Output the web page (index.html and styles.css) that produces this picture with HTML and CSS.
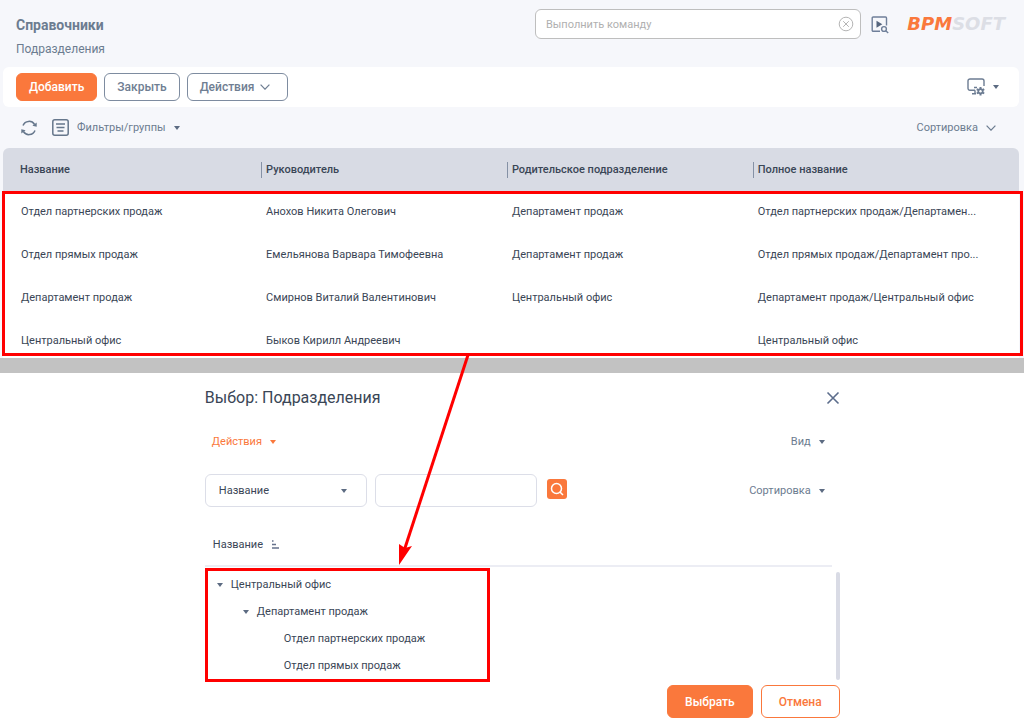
FILE: index.html
```
<!DOCTYPE html>
<html lang="ru">
<head>
  <meta charset="UTF-8">
  <meta name="viewport" content="width=device-width, initial-scale=1.0">
  <title>Справочники - Подразделения</title>
  <link rel="stylesheet" href="styles.css">
</head>
<body>
  <section class="section-page">
    <header class="header">
      <div class="titles">
        <h1>Справочники</h1>
        <p class="subtitle">Подразделения</p>
      </div>
      <div class="command">
        <input type="text" placeholder="Выполнить команду" aria-label="Выполнить команду">
        <button class="icon-btn" aria-label="Очистить">
          <svg width="16" height="16" viewBox="0 0 16 16" fill="none" stroke="#b5b5b5"><circle cx="8" cy="8" r="6.8"/><path d="M5.2 5.2l5.6 5.6M10.8 5.2l-5.6 5.6"/></svg>
        </button>
      </div>
      <button class="icon-btn" aria-label="Выполнить">
        <svg width="18" height="18" viewBox="0 0 18 18" fill="none" stroke="#6f7f99" stroke-width="1.4"><path d="M9 15.3H2.2a1 1 0 0 1-1-1V2a1 1 0 0 1 1-1h12.3a1 1 0 0 1 1 1v7.5"/><path d="M5.5 4.8v7l5.8-3.5z" fill="#55657d" stroke="none"/><circle cx="13" cy="13" r="2.4"/><path d="M14.8 14.8l2.4 2.3"/></svg>
      </button>
      <a href="#" class="logo"><span>BPM</span>SOFT</a>
    </header>

    <div class="toolbar">
      <button class="btn primary">Добавить</button>
      <button class="btn">Закрыть</button>
      <button class="btn menu">Действия
        <svg width="10" height="6" viewBox="0 0 10 6" fill="none" stroke="currentColor" stroke-width="1.2"><path d="M.6.6L5 5.2 9.4.6"/></svg>
      </button>
      <button class="icon-btn view" aria-label="Вид">
        <svg width="18" height="18" viewBox="0 0 18 18" fill="none" stroke="#6c7c92" stroke-width="1.4"><path d="M8 12.3H3A2 2 0 0 1 1 10.3V3a2 2 0 0 1 2-2h12a2 2 0 0 1 2 2v5M5 15.8h4M8 12.3v3M7 9.5h3"/><path d="M13.5 9v8.6M9.8 11.1l7.4 4.4M9.8 15.5l7.4-4.4" stroke-width="2"/><circle cx="13.5" cy="13.3" r="3" fill="#6c7c92" stroke="none"/><circle cx="13.5" cy="13.3" r="1.2" fill="#fff" stroke="none"/></svg>
        <i class="caret"></i>
      </button>
    </div>

    <div class="filters">
      <button class="icon-btn" aria-label="Обновить">
        <svg width="16" height="16" viewBox="0 0 16 16" fill="none" stroke="#66778c" stroke-width="1.5"><path d="M2 5.5A6.5 6.5 0 0 1 13.6 4.5M14 10.5A6.5 6.5 0 0 1 2.4 11.5"/><path d="M15.7 2.4v4.3l-4.3-1zM.3 13.6V9.3l4.3 1z" fill="#66778c" stroke="none"/></svg>
      </button>
      <button class="text-btn">
        <svg width="17" height="17" viewBox="0 0 17 17" fill="none" stroke="#66778c" stroke-width="1.5"><rect x=".8" y=".8" width="15.4" height="15.4" rx="2"/><path d="M4 5h9M4.5 8.5h8M5.5 12h6"/></svg>
        Фильтры/группы <i class="caret"></i>
      </button>
      <button class="text-btn sort">Сортировка
        <svg width="10" height="6" viewBox="0 0 10 6" fill="none" stroke="currentColor" stroke-width="1.2"><path d="M.6.6L5 5.2 9.4.6"/></svg>
      </button>
    </div>

    <div class="grid">
      <table>
        <thead>
          <tr>
            <th><span>Название</span></th>
            <th><span>Руководитель</span></th>
            <th><span>Родительское подразделение</span></th>
            <th><span>Полное название</span></th>
          </tr>
        </thead>
        <tbody>
          <tr>
            <td>Отдел партнерских продаж</td>
            <td>Анохов Никита Олегович</td>
            <td>Департамент продаж</td>
            <td>Отдел партнерских продаж/Департамен...</td>
          </tr>
          <tr>
            <td>Отдел прямых продаж</td>
            <td>Емельянова Варвара Тимофеевна</td>
            <td>Департамент продаж</td>
            <td>Отдел прямых продаж/Департамент про...</td>
          </tr>
          <tr>
            <td>Департамент продаж</td>
            <td>Смирнов Виталий Валентинович</td>
            <td>Центральный офис</td>
            <td>Департамент продаж/Центральный офис</td>
          </tr>
          <tr>
            <td>Центральный офис</td>
            <td>Быков Кирилл Андреевич</td>
            <td></td>
            <td>Центральный офис</td>
          </tr>
        </tbody>
      </table>
      <div class="highlight"></div>
    </div>
  </section>

  <section class="dialog">
    <div class="row dialog-head">
      <h2>Выбор: Подразделения</h2>
      <button class="icon-btn" aria-label="Закрыть окно">
        <svg width="14" height="14" viewBox="0 0 14 14" fill="none" stroke="#5c6d8c" stroke-width="1.6"><path d="M1.5 1.5l11 11M12.5 1.5l-11 11"/></svg>
      </button>
    </div>

    <div class="row dialog-menu">
      <button class="text-btn orange">Действия <i class="caret"></i></button>
      <button class="text-btn">Вид <i class="caret"></i></button>
    </div>

    <div class="row search">
      <div class="select">
        <select aria-label="Колонка">
          <option>Название</option>
        </select>
        <i class="caret"></i>
      </div>
      <input type="text" aria-label="Значение">
      <button class="search-btn" aria-label="Найти">
        <svg width="14" height="14" viewBox="0 0 14 14" fill="none" stroke="#fff" stroke-width="1.5"><circle cx="6.5" cy="6.5" r="5"/><path d="M10 10l3 3"/></svg>
      </button>
      <button class="text-btn sort">Сортировка <i class="caret"></i></button>
    </div>

    <div class="column-head">
      Название
      <svg width="8" height="9" viewBox="0 0 8 9" fill="none" stroke="#66728c" stroke-width="1.3"><path d="M1 1h1.5M1 4.5h4M1 8h7"/></svg>
    </div>

    <div class="list">
      <ul class="tree">
        <li><i class="caret"></i>Центральный офис</li>
        <li class="level2"><i class="caret"></i>Департамент продаж</li>
        <li class="level3">Отдел партнерских продаж</li>
        <li class="level3">Отдел прямых продаж</li>
      </ul>
      <div class="scrollbar"></div>
    </div>

    <div class="dialog-buttons">
      <button class="btn large primary">Выбрать</button>
      <button class="btn large outline">Отмена</button>
    </div>

    <svg class="arrow" width="80" height="212" viewBox="0 0 80 212"><path d="M73 0L9 196" stroke="#f00" stroke-width="3"/><path d="M4 210V189l6 4 7-2z" fill="#f00"/></svg>
  </section>
</body>
</html>
```

FILE: styles.css
```
* {
  box-sizing: border-box;
}
body {
  margin: 0;
  background: #fff;
  color: #3a4656;
  font-family: Roboto, "Liberation Sans", sans-serif;
  font-size: 11px;
  line-height: 16px;
}
h1, h2, p, ul {
  margin: 0;
  padding: 0;
}
button, input, select {
  font-family: inherit;
  font-size: inherit;
  line-height: inherit;
  color: inherit;
}
button {
  cursor: pointer;
}
svg {
  flex: none;
}

/* section page */
.section-page {
  background: #f6f7fb;
  border-bottom: 15px solid #c2c2c2;
}
.header {
  display: flex;
  align-items: flex-start;
  height: 67px;
  padding: 9px 19px 0 16px;
}
.titles {
  flex: 1;
  padding-top: 6px;
  color: #6c7c90;
}
h1 {
  font-size: 14px;
  line-height: 20px;
}
.subtitle {
  padding-top: 6px;
  font-size: 12px;
}
.command {
  display: flex;
  align-items: center;
  width: 33%;
  height: 30px;
  margin-right: 10px;
  padding: 0 6px 0 10px;
  background: #fff;
  border: 1px solid #bebebe;
  border-radius: 6px;
}
.command input {
  flex: 1;
  min-width: 0;
  padding: 2px 0 0;
  border: none;
  outline: none;
  background: none;
}
.command input::placeholder {
  color: #b0b0b0;
}
.icon-btn {
  display: flex;
  align-items: center;
  padding: 0;
  border: none;
  background: none;
}
.header > .icon-btn {
  margin: 7px 18px 0 0;
}
.logo {
  padding-top: 6px;
  font: italic bold 18px/18px "DejaVu Sans", sans-serif;
  color: #dcdee5;
  text-decoration: none;
}
.logo span {
  color: #fa783c;
}
.toolbar {
  display: flex;
  align-items: center;
  gap: 7px;
  height: 40px;
  margin: 0 5px 0 3px;
  padding: 0 20px 0 13px;
  background: #fff;
  border-radius: 6px;
}
.btn {
  display: flex;
  align-items: center;
  justify-content: center;
  gap: 6px;
  height: 28px;
  padding: 0 12px;
  border: 1px solid #7e8ca0;
  border-radius: 6px;
  background: #fff;
  color: #6f7e92;
  font-size: 12px;
  font-weight: 500;
}
.btn.primary {
  border-color: #fa783c;
  background: #fa783c;
  color: #fff;
}
.btn.menu {
  padding-right: 17px;
}
.btn.outline {
  border-color: #fa783c;
  color: #fa783c;
}
.btn.large {
  height: 33px;
  padding: 0 17px;
}
.view {
  gap: 8px;
  margin-left: auto;
}
.caret {
  display: inline-block;
  border: 3px solid transparent;
  border-top: 4px solid #5c6b82;
  border-bottom: none;
}
.filters {
  display: flex;
  align-items: center;
  gap: 15px;
  height: 41px;
  padding: 0 28px 0 21px;
}
.text-btn {
  display: flex;
  align-items: center;
  gap: 8px;
  padding: 0;
  border: none;
  background: none;
  color: #6c7c90;
}
.sort {
  margin-left: auto;
}

/* grid */
.grid {
  position: relative;
  height: 210px;
}
table {
  width: calc(100% - 8px);
  margin: 0 5px 0 3px;
  border-collapse: separate;
  border-spacing: 0;
  table-layout: fixed;
}
th {
  width: 24.2%;
  height: 43px;
  padding: 0;
  background: #d8dbe4;
  font-weight: 500;
  text-align: left;
}
th:first-child {
  width: 25.4%;
  padding-left: 17px;
  border-radius: 6px 0 0 0;
}
th:last-child {
  width: 26.2%;
  border-radius: 0 6px 0 0;
}
th + th span {
  display: block;
  padding-left: 4px;
  border-left: 1px solid #8591a5;
}
tbody {
  background: #fff;
}
td {
  height: 43px;
  padding: 13px 30px 0 5px;
  white-space: nowrap;
  vertical-align: top;
}
tbody tr:last-child td {
  height: 38px;
}
td:first-child {
  padding-left: 18px;
}
.highlight {
  position: absolute;
  inset: 43px 1px 2px 2px;
  border: 3px solid #f00;
}

/* lookup dialog */
.dialog {
  position: relative;
  width: 62%;
  margin-left: 20%;
  padding: 13px 0 4px;
}
.row {
  display: flex;
  align-items: center;
  justify-content: space-between;
}
h2 {
  font-size: 16px;
  font-weight: 400;
  line-height: 24px;
}
.dialog-menu {
  padding: 24px 15px 24px 7px;
}
.orange {
  color: #fa783c;
}
.orange .caret {
  border-top-color: #fa783c;
}
.search {
  gap: 8px;
  padding-right: 15px;
}
.select, .search input {
  display: flex;
  align-items: center;
  width: 162px;
  height: 33px;
  border: 1px solid #dcdee8;
  border-radius: 6px;
  background: #fff;
}
.select {
  padding: 0 19px 0 13px;
}
.select select {
  flex: 1;
  padding: 0;
  border: none;
  background: none;
  appearance: none;
}
.search-btn {
  display: flex;
  align-items: center;
  justify-content: center;
  width: 20px;
  height: 20px;
  margin: 0 0 4px 2px;
  padding: 0;
  border: none;
  border-radius: 3px;
  background: #fa783c;
}
.column-head {
  display: flex;
  align-items: center;
  gap: 8px;
  height: 60px;
  margin-right: 8px;
  padding: 17px 8px 0;
  border-bottom: 2px solid #ecedf4;
}
.list {
  display: flex;
  align-items: flex-start;
  justify-content: space-between;
  padding-top: 1px;
}
.tree {
  width: 45%;
  padding: 0 9px;
  border: 3px solid #f00;
  list-style: none;
}
.tree li {
  display: flex;
  align-items: center;
  gap: 8px;
  height: 27px;
}
.tree .level2 {
  padding-left: 26px;
}
.tree .level3 {
  padding-left: 67px;
}
.scrollbar {
  width: 4px;
  height: 108px;
  margin-top: 4px;
  border-radius: 2px;
  background: #d9dbe5;
}
.dialog-buttons {
  display: flex;
  justify-content: flex-end;
  gap: 8px;
  padding-top: 3px;
}

/* arrow from the grid to the tree */
.arrow {
  position: absolute;
  top: -18px;
  left: 190px;
}
```
